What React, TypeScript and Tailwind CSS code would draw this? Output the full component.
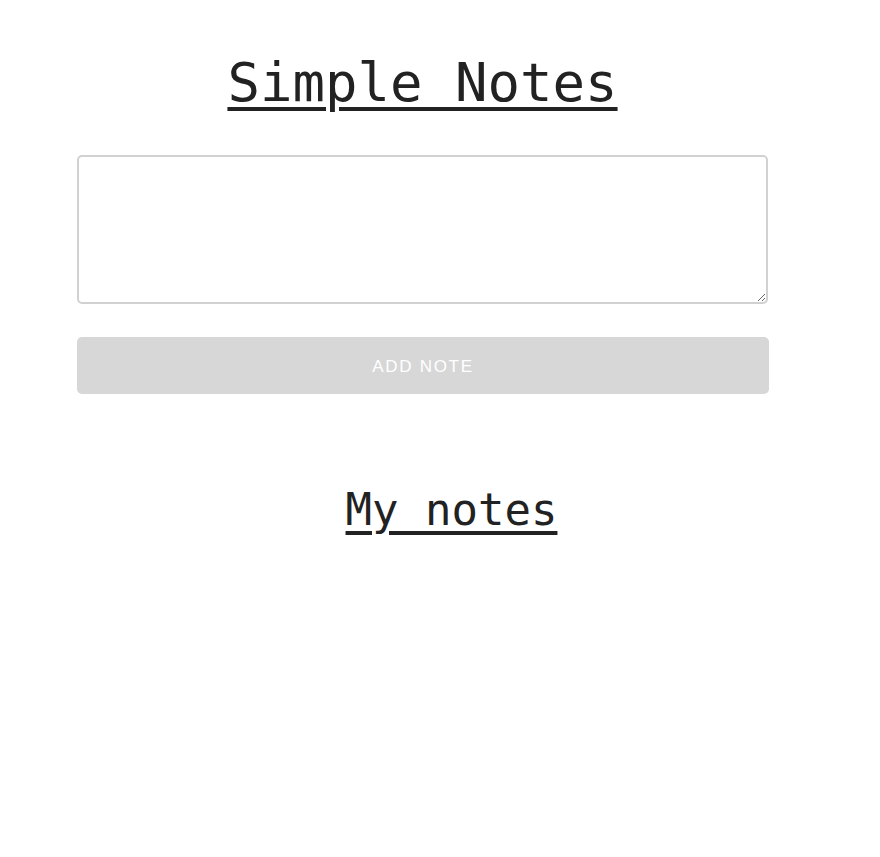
import React, { useState } from 'react';

const App = () => {
  const [note, setNote] = useState('');

  return (
    <div className="min-h-[857px] w-[880px] bg-white text-[#222]">
      <div className="ml-[77px] w-[691px] pt-[51px]">
        <h1 className="text-center font-['DejaVu_Sans_Mono',monospace] text-[54px] leading-[1.2] underline decoration-[4px] underline-offset-[6px]">
          Simple Notes
        </h1>

        <textarea
          value={note}
          onChange={e => setNote(e.target.value)}
          className="mt-[39px] block h-[149px] w-full resize-y rounded-[5px] border-2 border-[#d1d1d1] bg-white p-2 font-['Liberation_Sans',sans-serif] text-base outline-none"
        />

        <button
          disabled={!note}
          className="mt-[33px] flex h-[57px] w-[692px] items-center justify-center rounded-[5px] bg-[#d7d7d7] pt-[3px] font-['Liberation_Sans',sans-serif] text-[17px] tracking-[0.1em] text-white"
        >
          ADD NOTE
        </button>
      </div>

      {/* notes list */}
      <div className="ml-[77px] w-[749px] pt-[90px]">
        <h2 className="text-center font-['DejaVu_Sans_Mono',monospace] text-[44px] leading-[1.2] underline decoration-[4px] underline-offset-[6px]">
          My notes
        </h2>
      </div>
    </div>
  );
};

export default App;
